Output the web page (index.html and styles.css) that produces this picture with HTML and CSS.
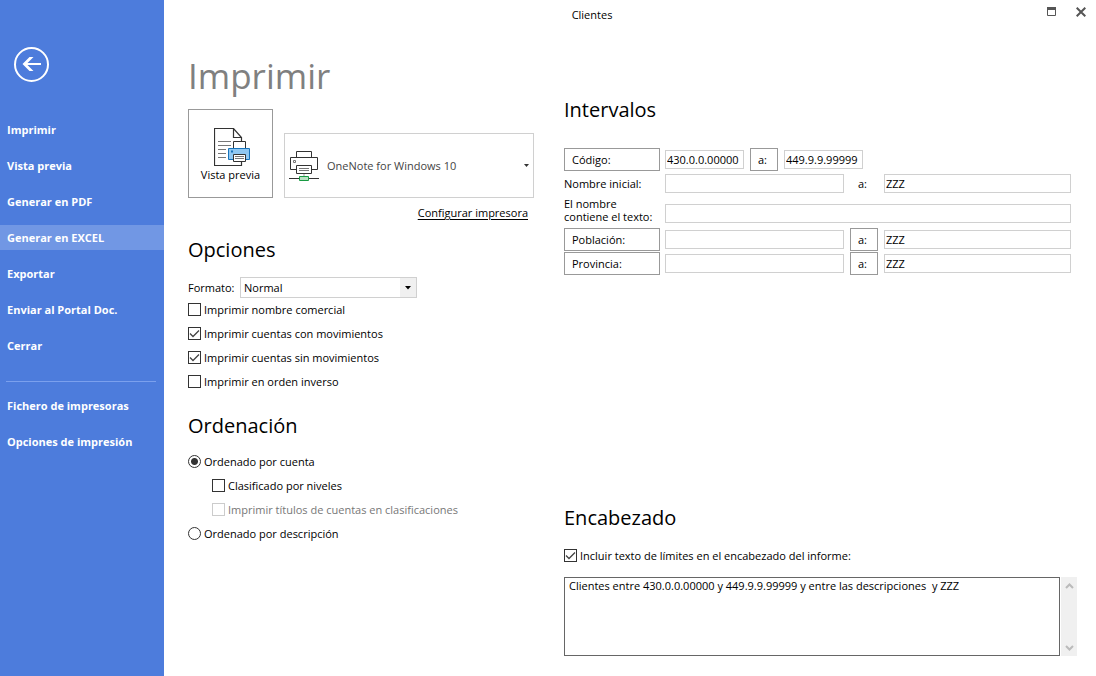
FILE: index.html
```html
<!DOCTYPE html>
<html lang="es">
<head>
<meta charset="utf-8">
<title>Clientes</title>
<link rel="stylesheet" href="styles.css">
</head>
<body>
<div class="window">
  <aside class="sidebar">
    <button class="back" type="button" aria-label="Volver">
      <svg width="35" height="35" viewBox="0 0 35 35" fill="none" stroke="#fff"><circle cx="17.5" cy="17.5" r="16.5" stroke-width="2"/><path d="M11 17H27" stroke-width="2"/><path d="M8.500 17L15.500 10H19.500L12.500 17L19.500 24H15.500Z" fill="#fff" stroke="none"/></svg>
    </button>
    <nav class="menu">
      <button class="menu-item" type="button">Imprimir</button>
      <button class="menu-item" type="button">Vista previa</button>
      <button class="menu-item" type="button">Generar en PDF</button>
      <button class="menu-item selected" type="button">Generar en EXCEL</button>
      <button class="menu-item" type="button">Exportar</button>
      <button class="menu-item" type="button">Enviar al Portal Doc.</button>
      <button class="menu-item" type="button">Cerrar</button>
      <hr class="menu-rule">
      <button class="menu-item" type="button">Fichero de impresoras</button>
      <button class="menu-item" type="button">Opciones de impresión</button>
    </nav>
  </aside>

  <div class="page">
    <header class="titlebar">
      <span class="caption">Clientes</span>
      <button class="win-button" type="button" aria-label="Maximizar">
        <svg width="9" height="9" viewBox="0 0 9 9"><path d="M.5 .5H8.5V8.5H.5Z" fill="none" stroke="#555"/><path d="M0 0H9V3H0Z" fill="#555"/></svg>
      </button>
      <button class="win-button" type="button" aria-label="Cerrar ventana">
        <svg width="10" height="10" viewBox="0 0 10 10"><path d="M.7 .7L9.3 9.3M9.3 .7L.7 9.3" stroke="#555" stroke-width="2"/></svg>
      </button>
    </header>

    <main class="content">
      <div class="left">
        <h1>Imprimir</h1>
        <div class="printer-row">
          <button class="preview" type="button">
            <svg width="37" height="39" viewBox="0 0 37 39" fill="none"><path d="M19.5 .5H.5V37.5H27.5V9.5L19.5 .5V9.5H27.5" fill="#fff" stroke="#333" stroke-width="1.2"/><path d="M4 13.500H17M4 17.500H17M4 21.500H12M4 25.500H12M4 29.500H12" stroke="#777"/><path d="M19.500 13.500H31.500V21H19.500Z" fill="#fff" stroke="#333"/><path d="M14.500 20.500H35.500V31.500H14.500Z" fill="#90c8f2" stroke="#1874bc"/><path d="M17 22.500H19V24.500H17Z" fill="#1874bc"/><path d="M19.500 26.500H31.500V33.500H19.500Z" fill="#fff" stroke="#333"/><path d="M21 28.500H30M21 30.500H30" stroke="#777"/></svg>
            <span>Vista previa</span>
          </button>
          <div class="combo printer">
            <svg class="printer-icon" width="30" height="30" viewBox="0 0 30 30" fill="none"><path d="M7.500 6V.5H22.500V6" stroke="#333"/><path d="M7.500 18.500H1.500V6.500H28.500V18.500H22.500" stroke="#333"/><path d="M4.500 9.500H6.500V11.500H4.500Z" stroke="#777"/><path d="M7.500 14.500H22.500V22.500H7.500Z" fill="#fff" stroke="#333"/><path d="M10 17.500H20M10 19.500H20" stroke="#777"/><path d="M15 23V25" stroke="#999"/><path d="M0 27.500H30" stroke="#333"/><path d="M10.500 25.500H19.500V29.500H10.500Z" fill="#b8e0c2" stroke="#189a42"/></svg>
            <select class="printer-select" aria-label="Impresora"><option>OneNote for Windows 10</option></select>
            <svg class="combo-arrow" width="5" height="3" viewBox="0 0 5 3"><path d="M0 0H5L2.500 3Z" fill="#333"/></svg>
          </div>
        </div>
        <a class="configure" href="#configurar">Configurar impresora</a>

        <section class="options">
          <h2>Opciones</h2>
          <div class="format-row">
            <label for="formato">Formato:</label>
            <div class="combo format">
              <select id="formato" class="format-select"><option>Normal</option></select>
              <span class="format-arrow"><svg width="6" height="4" viewBox="0 0 6 4"><path d="M0 0H6L3 3.500Z" fill="#000"/></svg></span>
            </div>
          </div>
          <label class="check"><input type="checkbox">Imprimir nombre comercial</label>
          <label class="check"><input type="checkbox" checked>Imprimir cuentas con movimientos</label>
          <label class="check"><input type="checkbox" checked>Imprimir cuentas sin movimientos</label>
          <label class="check"><input type="checkbox">Imprimir en orden inverso</label>
        </section>

        <section class="sorting">
          <h2>Ordenación</h2>
          <label class="check"><input type="radio" name="orden" checked>Ordenado por cuenta</label>
          <label class="check nested"><input type="checkbox">Clasificado por niveles</label>
          <label class="check nested disabled"><input type="checkbox" disabled>Imprimir títulos de cuentas en clasificaciones</label>
          <label class="check"><input type="radio" name="orden">Ordenado por descripción</label>
        </section>
      </div>

      <div class="right">
        <section class="ranges">
          <h2>Intervalos</h2>
          <div class="range">
            <button class="field-button" type="button">Código:</button>
            <input class="text code" aria-label="Código desde" value="430.0.0.00000">
            <button class="to-button" type="button">a:</button>
            <input class="text code" aria-label="Código hasta" value="449.9.9.99999">
          </div>
          <div class="range">
            <label class="field-label" for="nombre-desde">Nombre inicial:</label>
            <input class="text from" id="nombre-desde">
            <label class="to-label" for="nombre-hasta">a:</label>
            <input class="text until" id="nombre-hasta" value="ZZZ">
          </div>
          <div class="range tall">
            <label class="field-label" for="contiene">El nombre<br>contiene el texto:</label>
            <input class="text from" id="contiene">
          </div>
          <div class="range">
            <button class="field-button" type="button">Población:</button>
            <input class="text from" aria-label="Población desde">
            <button class="to-button" type="button">a:</button>
            <input class="text until" aria-label="Población hasta" value="ZZZ">
          </div>
          <div class="range">
            <button class="field-button" type="button">Provincia:</button>
            <input class="text from" aria-label="Provincia desde">
            <button class="to-button" type="button">a:</button>
            <input class="text until" aria-label="Provincia hasta" value="ZZZ">
          </div>
        </section>

        <section class="heading-text">
          <h2>Encabezado</h2>
          <label class="check"><input type="checkbox" checked>Incluir texto de límites en el encabezado del informe:</label>
          <div class="memo">
            <textarea class="memo-text" aria-label="Texto del encabezado">Clientes entre 430.0.0.00000 y 449.9.9.99999 y entre las descripciones  y ZZZ</textarea>
            <div class="scrollbar">
              <button class="scroll-button" type="button" aria-label="Subir"><svg width="9" height="6" viewBox="0 0 9 6" fill="none"><path d="M1 5L4.500 1.500L8 5" stroke="#bbb" stroke-width="2"/></svg></button>
              <button class="scroll-button" type="button" aria-label="Bajar"><svg width="9" height="6" viewBox="0 0 9 6" fill="none"><path d="M1 1L4.500 4.500L8 1" stroke="#bbb" stroke-width="2"/></svg></button>
            </div>
          </div>
        </section>
      </div>
    </main>
  </div>
</div>
</body>
</html>
```

FILE: styles.css
```css
* { box-sizing: border-box; }

body {
  margin: 0;
  background: #fff;
  color: #000;
  font: 11px/16px "Open Sans", "Noto Sans", sans-serif;
}

button, input, select, textarea {
  margin: 0;
  padding: 0;
  border: 0;
  border-radius: 0;
  background: none;
  color: inherit;
  font: inherit;
}

svg { display: block; }

h1 {
  margin: 0 0 11px;
  color: #808080;
  font-size: 35px;
  font-weight: 400;
  line-height: 44px;
}

h2 {
  margin: 0;
  font-size: 20px;
  font-weight: 400;
  line-height: 32px;
}

.window { display: flex; min-height: 100vh; }

/* Sidebar */
.sidebar {
  flex: 0 0 164px;
  padding-top: 47px;
  background: #4d7cdc;
  color: #fff;
}
.back { display: block; margin-left: 14px; }
.menu {
  display: flex;
  flex-direction: column;
  gap: 11px;
  margin-top: 35px;
}
.menu-item {
  height: 25px;
  padding: 0 7px;
  font-weight: 700;
  text-align: left;
}
.menu-item.selected { background: #7197e4; }
.menu-rule {
  width: 150px;
  height: 1px;
  margin: 12px 0 0 6px;
  border: 0;
  background: #7ba0ed;
}

/* Page and title bar */
.page {
  display: flex;
  flex: 1;
  flex-direction: column;
  min-width: 0;
}
.titlebar { display: flex; height: 30px; }
.caption {
  flex: 1;
  margin-right: 16px;
  line-height: 30px;
  text-align: center;
}
.win-button {
  display: grid;
  place-items: center;
  width: 30px;
  height: 23px;
}

.content {
  display: flex;
  flex: 1;
  gap: 30px;
  padding: 24px 19px 20px 24px;
}
.left { flex: 0 0 346px; }
.right {
  display: flex;
  flex: 1;
  flex-direction: column;
  min-width: 0;
  padding-top: 40px;
}

/* Printer */
.printer-row {
  display: flex;
  align-items: flex-end;
  gap: 11px;
}
.preview {
  display: flex;
  flex-direction: column;
  align-items: center;
  width: 85px;
  height: 89px;
  padding-top: 18px;
  border: 1px solid #999;
}
.preview svg { margin-left: 4px; }
.combo { display: grid; border: 1px solid #d0d0d0; }
.combo > * { grid-area: 1 / 1; }
.combo select { width: 100%; appearance: none; }
.printer {
  flex: 1;
  align-items: center;
  height: 65px;
}
.printer-icon { margin-left: 4px; }
.printer .printer-select {
  height: 63px;
  padding-left: 42px;
  color: #444;
}
.combo-arrow {
  justify-self: end;
  margin-right: 4px;
  pointer-events: none;
}
.configure {
  display: block;
  margin: 6px 6px 0 0;
  color: inherit;
  line-height: 18px;
  text-align: right;
  text-underline-offset: 2px;
}

/* Options and sorting */
.options { margin-top: 12px; }
.sorting { margin-top: 16px; }
.sorting h2 { margin-bottom: 8px; }
.format-row {
  display: flex;
  align-items: center;
  margin-top: 11px;
}
.format-row label { width: 52px; }
.format { width: 177px; height: 21px; }
.format .format-select { height: 19px; padding-left: 3px; }
.format-arrow {
  display: grid;
  justify-self: end;
  place-items: center;
  width: 16px;
  background: #f0f0f0;
  pointer-events: none;
}
.check {
  display: flex;
  align-items: center;
  gap: 3px;
  height: 24px;
}
.check input {
  width: 13px;
  height: 13px;
  margin-bottom: 2px;
  border: 1px solid #333;
  appearance: none;
}
.check input[type="checkbox"]:checked {
  background: url("data:image/svg+xml,%3Csvg xmlns='http://www.w3.org/2000/svg' viewBox='0 0 11 11'%3E%3Cpath d='M1 5.500L4 8.500L10 2.500' fill='none' stroke='%23444' stroke-width='1.300'/%3E%3C/svg%3E");
}
.check input[type="radio"] { border-radius: 50%; }
.check input[type="radio"]:checked {
  background: radial-gradient(circle, #333 3px, transparent 4px);
}
.nested { margin-left: 24px; }
.disabled { color: #777; }
.check.disabled input { border-color: #ccc; }

/* Ranges */
.ranges {
  display: flex;
  flex-direction: column;
  gap: 1px;
  padding-right: 6px;
}
.ranges h2 { margin-bottom: 21px; }
.range {
  display: flex;
  align-items: center;
  gap: 6px;
  min-height: 23px;
}
.range.tall { min-height: 31px; padding-top: 3px; line-height: 13px; }
.range.tall .field-label { align-self: flex-start; margin-top: -2px; }
.field-label, .field-button { flex: 0 0 96px; margin-right: -1px; }
.field-label { white-space: nowrap; }
.field-button, .to-button {
  height: 23px;
  border: 1px solid #999;
}
.field-button { padding-left: 7px; text-align: left; }
.to-button, .to-label { flex: 0 0 28px; padding-right: 3px; text-align: center; }
.text {
  height: 19px;
  min-width: 0;
  padding: 0 1px;
  border: 1px solid #d0d0d0;
}
.code { width: 79px; }
.from { flex: 22 1 0; }
.until { flex: 23 1 0; }

/* Report heading */
.heading-text { margin-top: auto; }
.heading-text .check { margin-top: 10px; }
.memo { display: flex; gap: 1px; margin-top: 9px; }
.memo-text {
  flex: 1;
  height: 79px;
  min-width: 0;
  padding: 0 4px;
  border: 1px solid #666;
  overflow: hidden;
  resize: none;
}
.scrollbar {
  display: flex;
  flex-direction: column;
  justify-content: space-between;
  width: 16px;
  background: #f0f0f0;
}
.scroll-button {
  display: grid;
  place-items: center;
  height: 17px;
}
```
